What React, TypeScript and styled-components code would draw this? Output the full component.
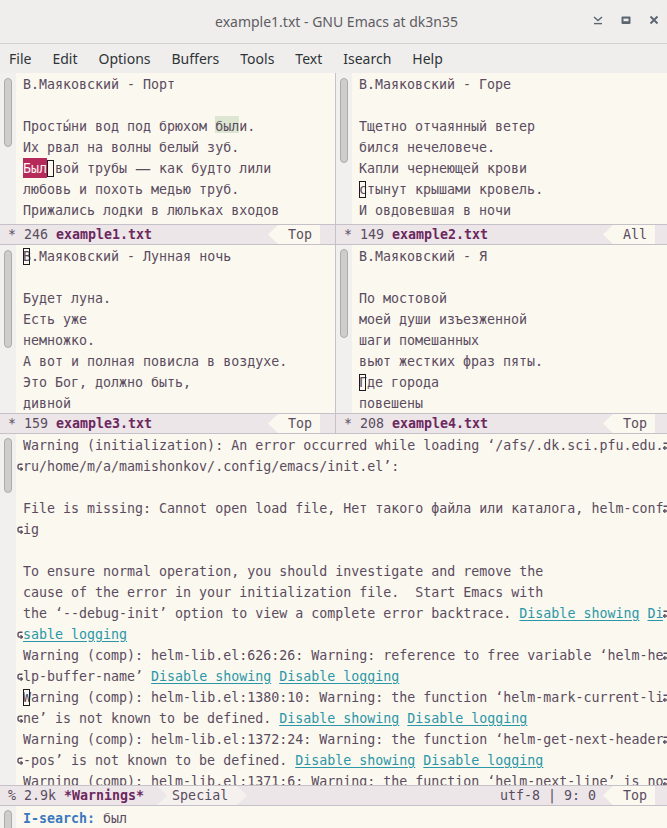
import React from 'react'
import styled, { createGlobalStyle } from 'styled-components'

const paper = '#fbf8ef'
const ink = '#5a4c60'
const chrome = '#efeeed'
const mono = `"DejaVu Sans Mono", "Liberation Mono", monospace`
const sans = `"Noto Sans", "Open Sans", sans-serif`

const GlobalStyle = createGlobalStyle`
  html, body {
    margin: 0;
    padding: 0;
    background: ${paper};
  }
  body {
    overflow: hidden;
  }
  #root {
    width: 667px;
    height: 828px;
  }
`

type Seg =
  | string
  | { k: 'match' | 'lazy' | 'cursor' | 'link' | 'dash'; t: string }

interface TextLine {
  s: Seg[]
  l?: boolean
  r?: boolean
}

const match = (t: string): Seg => ({ k: 'match', t })
const lazy = (t: string): Seg => ({ k: 'lazy', t })
const cur = (t: string): Seg => ({ k: 'cursor', t })
const link = (t: string): Seg => ({ k: 'link', t })
const dash: Seg = { k: 'dash', t: '—' }

const ln = (...s: Seg[]): TextLine => ({ s })

const port: TextLine[] = [
  ln('В.Маяковский - Порт'),
  ln(''),
  ln('Просты́ни вод под брюхом ', lazy('был'), 'и.'),
  ln('Их рвал на волны белый зуб.'),
  ln(match('Был'), cur(' '), 'вой трубы ', dash, ' как будто лили'),
  ln('любовь и похоть медью труб.'),
  ln('Прижались лодки в люльках входов'),
]

const gore: TextLine[] = [
  ln('В.Маяковский - Горе'),
  ln(''),
  ln('Тщетно отчаянный ветер'),
  ln('бился нечеловече.'),
  ln('Капли чернеющей крови'),
  ln(cur('с'), 'тынут крышами кровель.'),
  ln('И овдовевшая в ночи'),
]

const moon: TextLine[] = [
  ln(cur('В'), '.Маяковский - Лунная ночь'),
  ln(''),
  ln('Будет луна.'),
  ln('Есть уже'),
  ln('немножко.'),
  ln('А вот и полная повисла в воздухе.'),
  ln('Это Бог, должно быть,'),
  ln('дивной'),
]

const ya: TextLine[] = [
  ln('В.Маяковский - Я'),
  ln(''),
  ln('По мостовой'),
  ln('моей души изъезженной'),
  ln('шаги помешанных'),
  ln('вьют жестких фраз пяты.'),
  ln(cur('Г'), 'де города'),
  ln('повешены'),
]

const warnings: TextLine[] = [
  { s: ['Warning (initialization): An error occurred while loading ‘/afs/.dk.sci.pfu.edu.'], r: true },
  { s: ['ru/home/m/a/mamishonkov/.config/emacs/init.el’:'], l: true },
  { s: [''] },
  { s: ['File is missing: Cannot open load file, Нет такого файла или каталога, helm-conf'], r: true },
  { s: ['ig'], l: true },
  { s: [''] },
  { s: ['To ensure normal operation, you should investigate and remove the'] },
  { s: ['cause of the error in your initialization file.  Start Emacs with'] },
  {
    s: ['the ‘--debug-init’ option to view a complete error backtrace. ', link('Disable showing'), ' ', link('Di')],
    r: true,
  },
  { s: [link('sable logging')], l: true },
  { s: ['Warning (comp): helm-lib.el:626:26: Warning: reference to free variable ‘helm-he'], r: true },
  { s: ['lp-buffer-name’ ', link('Disable showing'), ' ', link('Disable logging')], l: true },
  {
    s: [cur('W'), 'arning (comp): helm-lib.el:1380:10: Warning: the function ‘helm-mark-current-li'],
    r: true,
  },
  { s: ['ne’ is not known to be defined. ', link('Disable showing'), ' ', link('Disable logging')], l: true },
  { s: ['Warning (comp): helm-lib.el:1372:24: Warning: the function ‘helm-get-next-header'], r: true },
  { s: ['-pos’ is not known to be defined. ', link('Disable showing'), ' ', link('Disable logging')], l: true },
  { s: ['Warning (comp): helm-lib.el:1371:6: Warning: the function ‘helm-next-line’ is no'], r: true },
]

const renderSeg = (seg: Seg, i: number) => {
  if (typeof seg === 'string') return <React.Fragment key={i}>{seg}</React.Fragment>
  switch (seg.k) {
    case 'match':
      return <Match key={i}>{seg.t}</Match>
    case 'lazy':
      return <Lazy key={i}>{seg.t}</Lazy>
    case 'cursor':
      return <Cursor key={i}>{seg.t}</Cursor>
    case 'link':
      return <Link key={i}>{seg.t}</Link>
    default:
      return <Dash key={i}>{seg.t}</Dash>
  }
}

// fringe bitmaps for continued lines
const LeftCurl = () => (
  <svg width="6" height="8" viewBox="0 0 6 8">
    <path d="M5.5 1.2 H2.6 A1.6 1.6 0 0 0 1 2.8 V4.4 A1.6 1.6 0 0 0 2.6 6 H5.2" fill="none" stroke={ink} strokeWidth="1.4" />
    <path d="M3.6 4.3 L5.6 6 L3.6 7.7" fill="none" stroke={ink} strokeWidth="1.2" />
  </svg>
)

const RightCurl = () => (
  <svg width="6" height="8" viewBox="0 0 6 8">
    <path d="M0.5 1.2 H3.4 A1.6 1.6 0 0 1 5 2.8 V4.4 A1.6 1.6 0 0 1 3.4 6 H0.8" fill="none" stroke={ink} strokeWidth="1.4" />
    <path d="M2.4 4.3 L0.4 6 L2.4 7.7" fill="none" stroke={ink} strokeWidth="1.2" />
  </svg>
)

const iconColor = '#5b6670'

const MinimizeIcon = () => (
  <svg width="10" height="10" viewBox="0 0 10 10">
    <path d="M1 2 L5 5.6 L9 2" fill="none" stroke={iconColor} strokeWidth="1.4" />
    <path d="M1 8.6 H9" stroke={iconColor} strokeWidth="1.4" />
  </svg>
)

const MaximizeIcon = () => (
  <svg width="10" height="10" viewBox="0 0 10 10">
    <rect x="0.5" y="1.5" width="9" height="7.5" rx="1" fill={iconColor} />
    <rect x="2.5" y="3.6" width="5" height="2.6" fill={chrome} />
  </svg>
)

const CloseIcon = () => (
  <svg width="10" height="10" viewBox="0 0 10 10">
    <path d="M1.5 1.5 L8.5 8.5 M8.5 1.5 L1.5 8.5" stroke={iconColor} strokeWidth="1.9" />
  </svg>
)

interface BufferProps {
  lines: TextLine[]
  thumbTop: number
  thumbHeight: number
  wide?: boolean
}

const Buffer = ({ lines, thumbTop, thumbHeight, wide }: BufferProps) => (
  <Pane>
    <ScrollTrack>
      <Thumb $top={thumbTop} $h={thumbHeight} />
    </ScrollTrack>
    <Body>
      {lines.map((line, i) => (
        <Line key={i}>
          <Fringe>{line.l && <LeftCurl />}</Fringe>
          <Text $wide={wide}>{line.s.map(renderSeg)}</Text>
          {wide && <RightFringe>{line.r && <RightCurl />}</RightFringe>}
        </Line>
      ))}
    </Body>
  </Pane>
)

interface FileModeProps {
  size: string
  name: string
  pos: string
  edge: number
}

const FileMode = ({ size, name, pos, edge }: FileModeProps) => (
  <ModeLine $edge={edge}>
    <ModeText>* {size} </ModeText>
    <BufferName>{name}</BufferName>
    <Spacer />
    <PositionBox>{pos}</PositionBox>
  </ModeLine>
)

const menu = ['File', 'Edit', 'Options', 'Buffers', 'Tools', 'Text', 'Isearch', 'Help']

export default function App() {
  return (
    <Frame>
      <GlobalStyle />
      <TitleBar>
        <Title>example1.txt - GNU Emacs at dk3n35</Title>
        <WindowButtons>
          <MinimizeIcon />
          <MaximizeIcon />
          <CloseIcon />
        </WindowButtons>
      </TitleBar>
      <MenuBar>
        {menu.map((m) => (
          <MenuItem key={m}>{m}</MenuItem>
        ))}
      </MenuBar>

      <Row $h={172}>
        <Window $w={335}>
          <Buffer lines={port} thumbTop={5} thumbHeight={69} />
          <FileMode size="246" name="example1.txt" pos="Top" edge={15} />
        </Window>
        <Divider />
        <Window>
          <Buffer lines={gore} thumbTop={5} thumbHeight={85} />
          <FileMode size="149" name="example2.txt" pos="All" edge={12} />
        </Window>
      </Row>

      <Row $h={189}>
        <Window $w={335}>
          <Buffer lines={moon} thumbTop={5} thumbHeight={98} />
          <FileMode size="159" name="example3.txt" pos="Top" edge={15} />
        </Window>
        <Divider />
        <Window>
          <Buffer lines={ya} thumbTop={4} thumbHeight={89} />
          <FileMode size="208" name="example4.txt" pos="Top" edge={12} />
        </Window>
      </Row>

      <Row $h={372}>
        <Window>
          <Buffer lines={warnings} thumbTop={4} thumbHeight={55} wide />
          <ModeLine $edge={12}>
            <ModeText>% 2.9k </ModeText>
            <BufferName>*Warnings*</BufferName>
            <MajorMode>Special</MajorMode>
            <Spacer />
            <Encoding>utf-8 | 9: 0</Encoding>
            <PositionBox>Top</PositionBox>
          </ModeLine>
        </Window>
      </Row>

      <Minibuffer>
        <ScrollTrack>
          <Thumb $top={4} $h={40} />
        </ScrollTrack>
        <MiniBody>
          <Fringe />
          <Prompt>I-search: </Prompt>
          <span>был</span>
        </MiniBody>
      </Minibuffer>
    </Frame>
  )
}

const Frame = styled.div`
  display: flex;
  flex-direction: column;
  width: 667px;
  height: 828px;
  overflow: hidden;
  background: ${paper};
`

const TitleBar = styled.header`
  display: grid;
  grid-template-columns: 1fr auto 1fr;
  align-items: center;
  height: 43px;
  flex-shrink: 0;
  background: ${chrome};
  border-bottom: 1px solid #d4d2d0;
`

const Title = styled.div`
  grid-column: 2;
  padding-left: 6px;
  font-family: ${sans};
  font-size: 14px;
  color: #5e5c62;
`

const WindowButtons = styled.div`
  grid-column: 3;
  justify-self: end;
  display: flex;
  align-items: center;
  gap: 18px;
  padding: 0 8px 3px 0;

  svg {
    display: block;
  }
`

const MenuBar = styled.nav`
  display: flex;
  align-items: center;
  gap: 21px;
  height: 29px;
  flex-shrink: 0;
  padding-left: 9px;
  background: ${chrome};
`

const MenuItem = styled.span`
  font-family: ${sans};
  font-size: 14px;
  color: #2f3437;
`

const Row = styled.div<{ $h: number }>`
  display: flex;
  height: ${(p) => p.$h}px;
  flex-shrink: 0;
  overflow: hidden;
`

const Window = styled.section<{ $w?: number }>`
  display: flex;
  flex-direction: column;
  width: ${(p) => (p.$w ? `${p.$w}px` : 'auto')};
  flex: ${(p) => (p.$w ? 'none' : '1')};
  min-width: 0;
  overflow: hidden;
`

const Divider = styled.div`
  width: 1px;
  flex-shrink: 0;
  background: #c6c0c8;
`

const Pane = styled.div`
  display: flex;
  flex: 1;
  min-height: 0;
  overflow: hidden;
`

const ScrollTrack = styled.div`
  display: flex;
  flex-direction: column;
  width: 16px;
  flex-shrink: 0;
  padding-left: 4px;
  box-sizing: border-box;
  background: #f1f0ef;
  overflow: hidden;
`

const Thumb = styled.div<{ $top: number; $h: number }>`
  flex-shrink: 0;
  margin-top: ${(p) => p.$top}px;
  height: ${(p) => p.$h}px;
  width: 8px;
  box-sizing: border-box;
  border: 1px solid #adacab;
  border-radius: 4px;
  background: #cecdcb;
`

const Body = styled.div`
  display: flex;
  flex-direction: column;
  flex: 1;
  min-width: 0;
  overflow: hidden;
  padding-top: 1px;
  background: ${paper};
  font-family: ${mono};
  font-size: 13.3px;
  color: ${ink};
`

const Line = styled.div`
  display: flex;
  height: 21px;
  line-height: 21px;
  flex-shrink: 0;
`

const Fringe = styled.div`
  display: flex;
  align-items: center;
  justify-content: center;
  width: 7px;
  flex-shrink: 0;

  svg {
    display: block;
  }
`

const RightFringe = styled(Fringe)`
  width: 8px;
  justify-content: flex-start;
`

const Text = styled.div<{ $wide?: boolean }>`
  white-space: pre;
  flex-shrink: 0;
  width: ${(p) => (p.$wide ? '640px' : 'auto')};
  overflow: hidden;
`

const Match = styled.span`
  display: inline-block;
  vertical-align: top;
  line-height: 21px;
  background: linear-gradient(#b52a5b, #b52a5b) top / 100% 20px no-repeat;
  color: #fdf0f3;
`

const Lazy = styled.span`
  display: inline-block;
  vertical-align: top;
  line-height: 21px;
  background: linear-gradient(#dce6d1, #dce6d1) top / 100% 17px no-repeat;
`

const Cursor = styled.span`
  position: relative;
  display: inline-block;
  vertical-align: top;
  line-height: 21px;

  &::after {
    content: '';
    position: absolute;
    top: 2px;
    bottom: 2px;
    left: 0;
    right: 1px;
    border: 1px solid #1c1a1e;
  }
`

const Link = styled.span`
  color: #2a97a8;
  text-decoration: underline;
  text-underline-offset: 2px;
`

const Dash = styled.span`
  display: inline-block;
  vertical-align: top;
  width: 16px;
  text-align: center;
  line-height: 21px;
  font-family: "DejaVu Sans", sans-serif;
  font-size: 16px;
`

const ModeLine = styled.div<{ $edge: number }>`
  display: flex;
  align-items: stretch;
  height: 21px;
  flex-shrink: 0;
  box-sizing: border-box;
  padding: 0 ${(p) => p.$edge}px 0 8px;
  border-top: 1px solid #c6c0c8;
  border-bottom: 1px solid #c6c0c8;
  background: #ece6e8;
  font-family: ${mono};
  font-size: 13.3px;
  line-height: 20px;
  color: ${ink};
  white-space: pre;
`

const ModeText = styled.span``

const BufferName = styled.span`
  font-weight: bold;
  color: #6d275f;
`

const Spacer = styled.span`
  flex: 1;
`

const PositionBox = styled.span`
  padding: 0 8px 0 20px;
  background: ${paper};
  clip-path: polygon(0 50%, 10px 0, 100% 0, 100% 100%, 10px 100%);
`

const MajorMode = styled.span`
  margin-left: 13px;
  padding: 0 19px 0 15px;
  background: #f5f1ef;
  clip-path: polygon(0 0, calc(100% - 10px) 0, 100% 50%, calc(100% - 10px) 100%, 0 100%, 10px 50%);
`

const Encoding = styled.span`
  margin-right: 7px;
`

const Minibuffer = styled.div`
  display: flex;
  height: 22px;
  flex-shrink: 0;
  overflow: hidden;
`

const MiniBody = styled.div`
  display: flex;
  flex: 1;
  padding-top: 2px;
  background: ${paper};
  font-family: ${mono};
  font-size: 13.3px;
  line-height: 21px;
  color: ${ink};
  white-space: pre;
`

const Prompt = styled.span`
  font-weight: bold;
  color: #3a78bf;
`
